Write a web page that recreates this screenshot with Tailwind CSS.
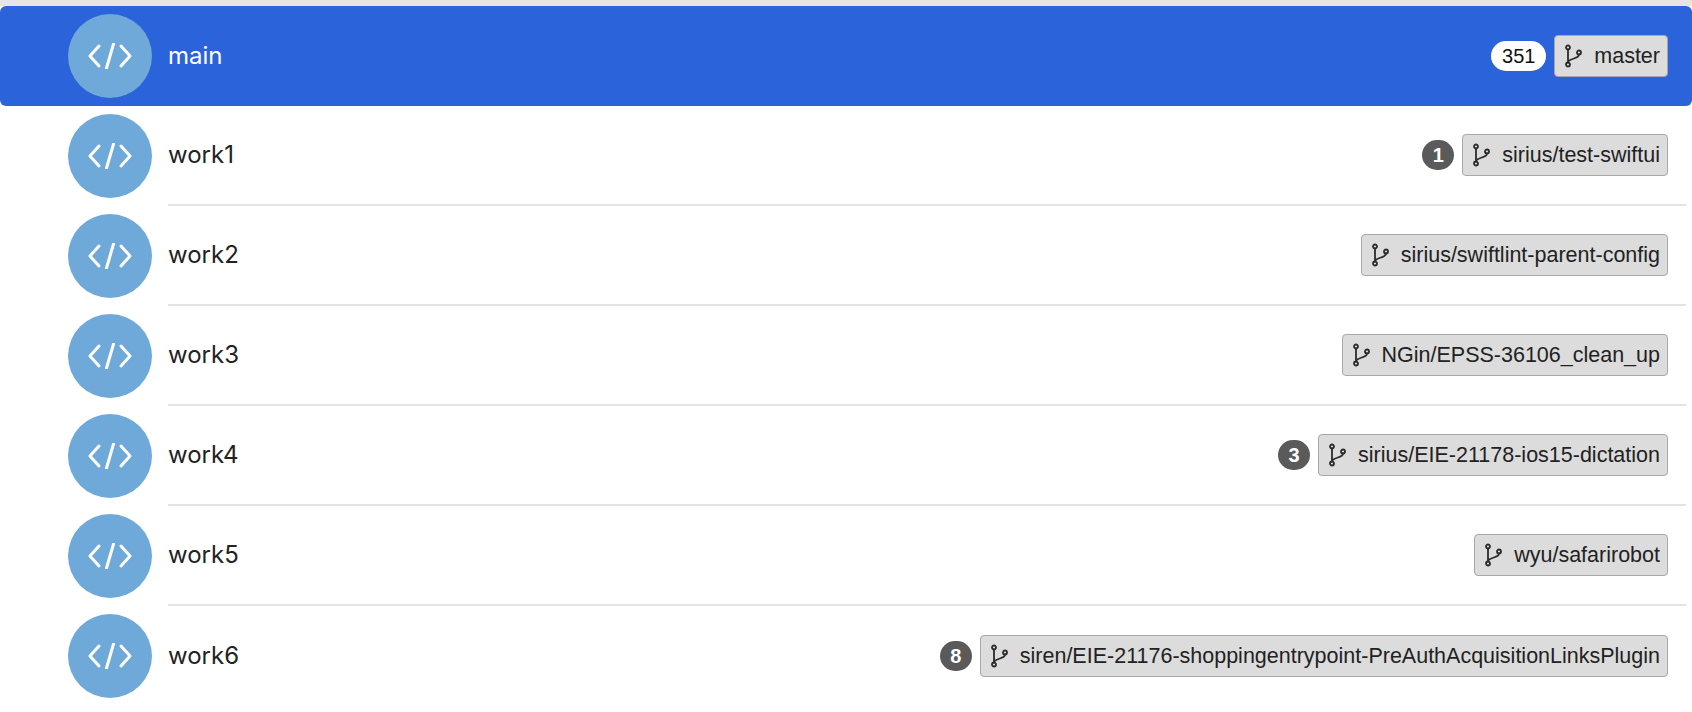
<!DOCTYPE html>
<html lang="en">
<head>
    <meta charset="UTF-8">
    <title>Workspaces</title>
    <script src="https://cdn.jsdelivr.net/npm/@tailwindcss/browser@4"></script>
</head>
<body class="bg-white overflow-hidden font-['Inter',sans-serif]">
    <svg class="hidden">
        <symbol id="code" viewBox="0 0 44 26">
            <path d="M11 3 2 13l9 10M33 3l9 10-9 10M25.500 1 18.500 25" fill="none" stroke="white" stroke-width="3" stroke-linecap="round" stroke-linejoin="round"/>
        </symbol>
        <symbol id="branch" viewBox="0 0 18 24">
            <g fill="none" stroke="#2b2b2b" stroke-width="1.800" stroke-linecap="round">
                <circle cx="4" cy="3.500" r="2"/>
                <circle cx="4" cy="20.500" r="2"/>
                <circle cx="15" cy="8.500" r="2"/>
                <path d="M4 5.500v13M15 10.500c0 5-11 3.500-11 8"/>
            </g>
        </symbol>
    </svg>

    <div class="h-[6px] bg-[#e5e5e5]"></div>

    <!-- Selected row -->
    <div class="h-[100px] flex items-center bg-[#2b63db] rounded-[6px] pl-[68px] pr-[24px]">
        <div class="w-[84px] h-[84px] rounded-full bg-[#6ea9da] flex items-center justify-center shrink-0">
            <svg class="w-[44px] h-[26px]"><use href="#code"/></svg>
        </div>
        <div class="flex-1 flex items-center ml-[16px]">
            <span class="text-[24px] text-white">main</span>
            <div class="ml-auto flex items-center gap-[8px]">
                <span class="h-[30px] w-[55px] rounded-full bg-white text-[#111] text-[20px] font-['Liberation_Sans',sans-serif] flex items-center justify-center">351</span>
                <div class="h-[42px] flex items-center gap-[12px] pl-[9px] pr-[7px] rounded-[4px] bg-[#dcdcdc] border border-[#a8a8a8] text-[21.500px] text-[#222] font-['Liberation_Sans',sans-serif]">
                    <svg class="w-[18px] h-[24px]"><use href="#branch"/></svg>
                    <span>master</span>
                </div>
            </div>
        </div>
    </div>

    <!-- Workspace rows -->
    <div class="h-[100px] flex items-center pl-[68px] pr-[6px]">
        <div class="w-[84px] h-[84px] rounded-full bg-[#6ea9da] flex items-center justify-center shrink-0">
            <svg class="w-[44px] h-[26px]"><use href="#code"/></svg>
        </div>
        <div class="flex-1 self-stretch flex items-center ml-[16px] pr-[18px] border-b-2 border-[#e3e3e3]">
            <span class="text-[24px] text-[#222]">work1</span>
            <div class="ml-auto flex items-center gap-[8px]">
                <span class="h-[30px] w-[32px] rounded-full bg-[#5a5a5a] text-white font-bold text-[20px] font-['Liberation_Sans',sans-serif] flex items-center justify-center">1</span>
                <div class="h-[42px] flex items-center gap-[12px] pl-[9px] pr-[7px] rounded-[4px] bg-[#dcdcdc] border border-[#a8a8a8] text-[21.500px] text-[#222] font-['Liberation_Sans',sans-serif]">
                    <svg class="w-[18px] h-[24px]"><use href="#branch"/></svg>
                    <span>sirius/test-swiftui</span>
                </div>
            </div>
        </div>
    </div>
    <div class="h-[100px] flex items-center pl-[68px] pr-[6px]">
        <div class="w-[84px] h-[84px] rounded-full bg-[#6ea9da] flex items-center justify-center shrink-0">
            <svg class="w-[44px] h-[26px]"><use href="#code"/></svg>
        </div>
        <div class="flex-1 self-stretch flex items-center ml-[16px] pr-[18px] border-b-2 border-[#e3e3e3]">
            <span class="text-[24px] text-[#222]">work2</span>
            <div class="ml-auto flex items-center gap-[8px]">
                <div class="h-[42px] flex items-center gap-[12px] pl-[9px] pr-[7px] rounded-[4px] bg-[#dcdcdc] border border-[#a8a8a8] text-[21.500px] text-[#222] font-['Liberation_Sans',sans-serif]">
                    <svg class="w-[18px] h-[24px]"><use href="#branch"/></svg>
                    <span>sirius/swiftlint-parent-config</span>
                </div>
            </div>
        </div>
    </div>
    <div class="h-[100px] flex items-center pl-[68px] pr-[6px]">
        <div class="w-[84px] h-[84px] rounded-full bg-[#6ea9da] flex items-center justify-center shrink-0">
            <svg class="w-[44px] h-[26px]"><use href="#code"/></svg>
        </div>
        <div class="flex-1 self-stretch flex items-center ml-[16px] pr-[18px] border-b-2 border-[#e3e3e3]">
            <span class="text-[24px] text-[#222]">work3</span>
            <div class="ml-auto flex items-center gap-[8px]">
                <div class="h-[42px] flex items-center gap-[12px] pl-[9px] pr-[7px] rounded-[4px] bg-[#dcdcdc] border border-[#a8a8a8] text-[21.500px] text-[#222] font-['Liberation_Sans',sans-serif]">
                    <svg class="w-[18px] h-[24px]"><use href="#branch"/></svg>
                    <span>NGin/EPSS-36106_clean_up</span>
                </div>
            </div>
        </div>
    </div>
    <div class="h-[100px] flex items-center pl-[68px] pr-[6px]">
        <div class="w-[84px] h-[84px] rounded-full bg-[#6ea9da] flex items-center justify-center shrink-0">
            <svg class="w-[44px] h-[26px]"><use href="#code"/></svg>
        </div>
        <div class="flex-1 self-stretch flex items-center ml-[16px] pr-[18px] border-b-2 border-[#e3e3e3]">
            <span class="text-[24px] text-[#222]">work4</span>
            <div class="ml-auto flex items-center gap-[8px]">
                <span class="h-[30px] w-[32px] rounded-full bg-[#5a5a5a] text-white font-bold text-[20px] font-['Liberation_Sans',sans-serif] flex items-center justify-center">3</span>
                <div class="h-[42px] flex items-center gap-[12px] pl-[9px] pr-[7px] rounded-[4px] bg-[#dcdcdc] border border-[#a8a8a8] text-[21.500px] text-[#222] font-['Liberation_Sans',sans-serif]">
                    <svg class="w-[18px] h-[24px]"><use href="#branch"/></svg>
                    <span>sirius/EIE-21178-ios15-dictation</span>
                </div>
            </div>
        </div>
    </div>
    <div class="h-[100px] flex items-center pl-[68px] pr-[6px]">
        <div class="w-[84px] h-[84px] rounded-full bg-[#6ea9da] flex items-center justify-center shrink-0">
            <svg class="w-[44px] h-[26px]"><use href="#code"/></svg>
        </div>
        <div class="flex-1 self-stretch flex items-center ml-[16px] pr-[18px] border-b-2 border-[#e3e3e3]">
            <span class="text-[24px] text-[#222]">work5</span>
            <div class="ml-auto flex items-center gap-[8px]">
                <div class="h-[42px] flex items-center gap-[12px] pl-[9px] pr-[7px] rounded-[4px] bg-[#dcdcdc] border border-[#a8a8a8] text-[21.500px] text-[#222] font-['Liberation_Sans',sans-serif]">
                    <svg class="w-[18px] h-[24px]"><use href="#branch"/></svg>
                    <span>wyu/safarirobot</span>
                </div>
            </div>
        </div>
    </div>
    <div class="h-[100px] flex items-center pl-[68px] pr-[6px]">
        <div class="w-[84px] h-[84px] rounded-full bg-[#6ea9da] flex items-center justify-center shrink-0">
            <svg class="w-[44px] h-[26px]"><use href="#code"/></svg>
        </div>
        <div class="flex-1 self-stretch flex items-center ml-[16px] pr-[18px]">
            <span class="text-[24px] text-[#222]">work6</span>
            <div class="ml-auto flex items-center gap-[8px]">
                <span class="h-[30px] w-[32px] rounded-full bg-[#5a5a5a] text-white font-bold text-[20px] font-['Liberation_Sans',sans-serif] flex items-center justify-center">8</span>
                <div class="h-[42px] flex items-center gap-[12px] pl-[9px] pr-[7px] rounded-[4px] bg-[#dcdcdc] border border-[#a8a8a8] text-[21.500px] text-[#222] font-['Liberation_Sans',sans-serif]">
                    <svg class="w-[18px] h-[24px]"><use href="#branch"/></svg>
                    <span>siren/EIE-21176-shoppingentrypoint-PreAuthAcquisitionLinksPlugin</span>
                </div>
            </div>
        </div>
    </div>
</body>
</html>
